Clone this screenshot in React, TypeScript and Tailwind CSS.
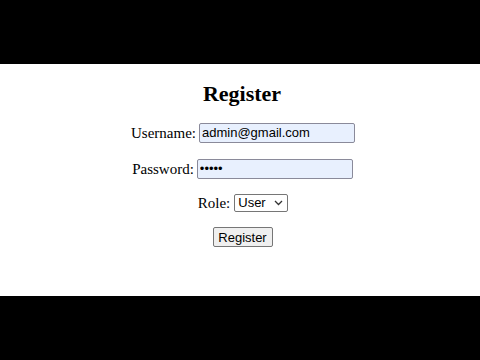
export default function App() {
  return (
    <div className="w-[480px] h-[360px] bg-black flex flex-col">
      <div className="h-[64px]" />
      <div className="h-[232px] bg-white flex flex-col items-center font-['Liberation_Serif',serif] text-black">
        <h1 className="mt-[17px] text-[22px] leading-[26px] font-bold pl-[4px]">Register</h1>
        <div className="mt-[16px] h-[20px] flex items-center gap-[3px] text-[15px] leading-[20px] pl-[6px]">
          <span>Username:</span>
          <input
            readOnly
            value="admin@gmail.com"
            className="w-[156px] h-[20px] px-[2px] bg-[#e8f0fe] border border-[#8a8a9a] rounded-[2px] font-['Liberation_Sans',sans-serif] text-[13px] text-black outline-none"
          />
        </div>
        <div className="mt-[16px] h-[20px] flex items-center gap-[3px] text-[15px] leading-[20px] pl-[5px]">
          <span>Password:</span>
          <input
            readOnly
            type="password"
            value="admin"
            className="w-[156px] h-[20px] px-[2px] bg-[#e8f0fe] border border-[#8a8a9a] rounded-[2px] font-['Liberation_Sans',sans-serif] text-[13px] text-black outline-none"
          />
        </div>
        <div className="mt-[15px] h-[18px] flex items-center gap-[4px] text-[15px] leading-[18px] pl-[6px]">
          <span>Role:</span>
          <div className="w-[54px] h-[18px] border border-[#767676] rounded-[2px] bg-white flex items-center justify-between pl-[3px] pr-[4px] font-['Liberation_Sans',sans-serif] text-[13px]">
            <span>User</span>
            <svg width="9" height="6" viewBox="0 0 9 6" fill="none" stroke="#333" strokeWidth="1.3">
              <path d="M1 1l3.5 3.5L8 1" />
            </svg>
          </div>
        </div>
        <button className="mt-[15px] ml-[5px] w-[60px] h-[20px] border border-[#767676] rounded-[2px] bg-[#efefef] font-['Liberation_Sans',sans-serif] text-[13px] leading-none text-black">
          Register
        </button>
      </div>
      <div className="flex-1" />
    </div>
  );
}
